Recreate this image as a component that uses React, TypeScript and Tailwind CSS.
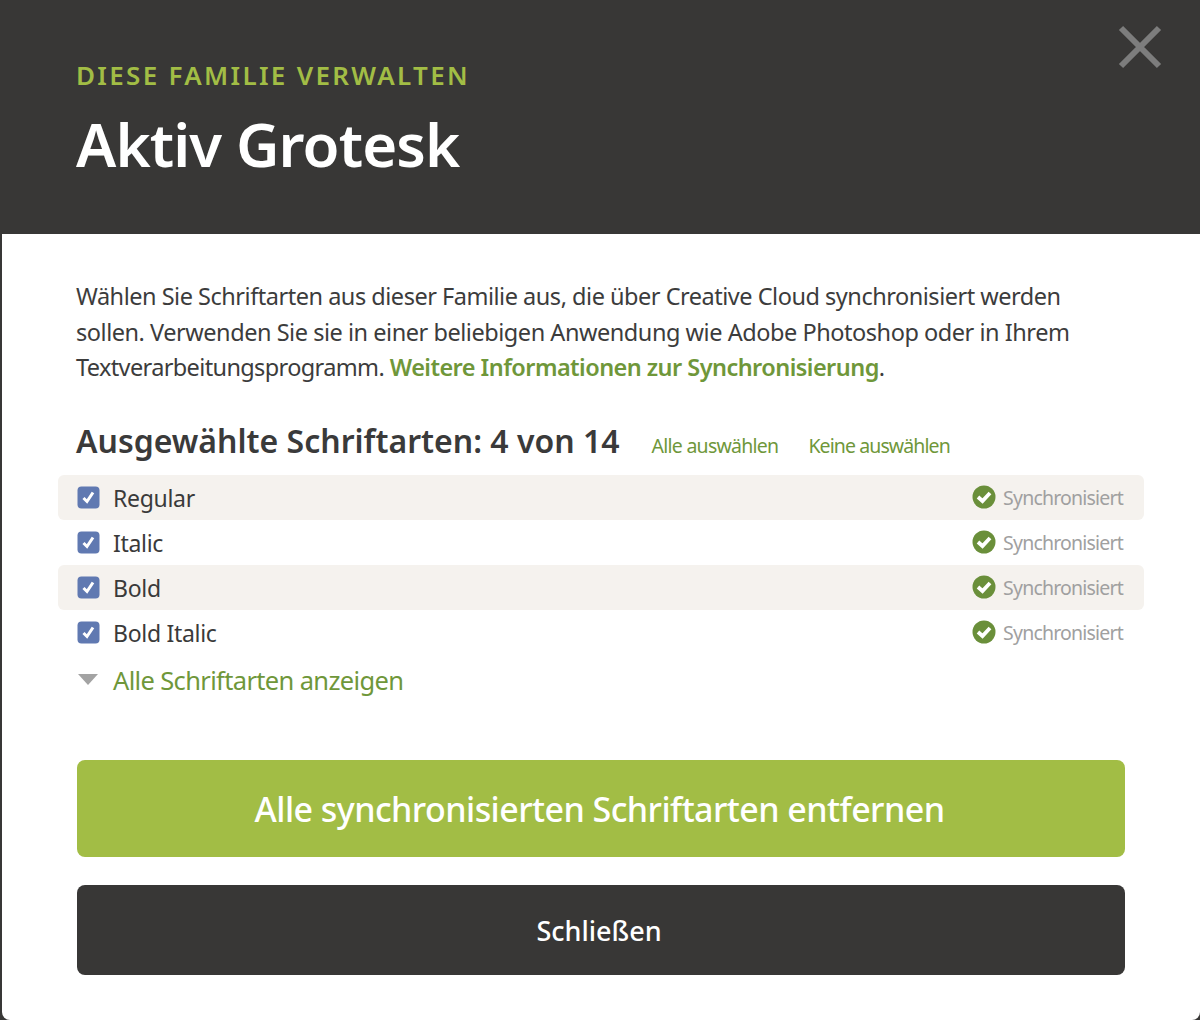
import React from "react";

const fonts = [
  { name: "Regular", shaded: true },
  { name: "Italic", shaded: false },
  { name: "Bold", shaded: true },
  { name: "Bold Italic", shaded: false },
];

// Blue checkbox with white tick
const CheckBox = () => (
  <svg width="23" height="23" viewBox="0 0 23 23" className="shrink-0">
    <rect x="0.5" y="0.5" width="22" height="22" rx="4" fill="#6079b1" />
    <path d="M6.5 12 L10 15.5 L16 6.5" fill="none" stroke="#ffffff" strokeWidth="3" />
  </svg>
);

// Green circle with white tick
const SyncedIcon = () => (
  <svg width="24" height="24" viewBox="0 0 24 24" className="shrink-0">
    <circle cx="12" cy="12" r="11.5" fill="#6a8f3a" />
    <path d="M6 12 L10.5 16 L18 8" fill="none" stroke="#ffffff" strokeWidth="3.8" />
  </svg>
);

function FontRow({ name, shaded }: { name: string; shaded: boolean }) {
  return (
    <div
      className={`flex h-[45px] items-center justify-between rounded-[6px] pl-[19px] pr-[21px] ${
        shaded ? "bg-[#f5f2ee]" : ""
      }`}
    >
      <div className="flex items-center gap-[13px]">
        <CheckBox />
        <span className="pt-[2px] text-[23px] tracking-[-0.3px] text-[#3a3a3a]">{name}</span>
      </div>
      <div className="flex items-center gap-[7px]">
        <SyncedIcon />
        <span className="pt-[2px] text-[19.5px] tracking-[-0.8px] text-[#a0a0a0]">
          Synchronisiert
        </span>
      </div>
    </div>
  );
}

export default function App() {
  return (
    <div className="h-[1020px] w-[1200px] overflow-hidden bg-[#383736] font-['Noto_Sans',sans-serif]">
      {/* Dark header */}
      <div className="relative h-[234px] pl-[76px] pt-[56px]">
        <p className="text-[26px] leading-[38px] font-semibold tracking-[2.3px] text-[#a2bd45]">
          DIESE FAMILIE VERWALTEN
        </p>
        <h1 className="mt-[10px] text-[60px] leading-[80px] font-semibold tracking-[-0.9px] text-white">
          Aktiv Grotesk
        </h1>
        <svg
          width="44"
          height="44"
          viewBox="0 0 44 44"
          className="absolute right-[38px] top-[25px]"
        >
          <path d="M3 3 L41 41 M41 3 L3 41" stroke="#7d7d7d" strokeWidth="6" />
        </svg>
      </div>

      {/* White panel, the dark backing shows at the left edge and bottom corners */}
      <div className="ml-[2px] h-[786px] rounded-b-[8px] bg-white pl-[56px] pr-[56px] pt-[45px]">
        {/* Intro copy */}
        <p className="pl-[18px] text-[23.5px] leading-[35.5px] tracking-[-0.46px] text-[#3c3c3c]">
          <span className="tracking-[-0.48px]">
            Wählen Sie Schriftarten aus dieser Familie aus, die über Creative Cloud synchronisiert
            werden
          </span>
          <br />
          sollen. Verwenden Sie sie in einer beliebigen Anwendung wie Adobe Photoshop oder in Ihrem
          <br />
          <span className="tracking-[-0.63px]">Textverarbeitungsprogramm.</span>{" "}
          <span className="font-semibold tracking-[-0.55px] text-[#6f973a]">
            Weitere Informationen zur Synchronisierung
          </span>
          .
        </p>

        {/* Selection heading */}
        <div className="mt-[31px] flex h-[48px] items-center pl-[18px]">
          <h2 className="text-[32px] font-semibold tracking-[0px] text-[#3a3a3a]">
            Ausgewählte Schriftarten: 4 von 14
          </h2>
          <a className="ml-[32px] mt-[10px] text-[19.5px] tracking-[-0.75px] text-[#6f973a]">
            Alle auswählen
          </a>
          <a className="ml-[30px] mt-[10px] text-[19.5px] tracking-[-0.9px] text-[#6f973a]">
            Keine auswählen
          </a>
        </div>

        {/* Font rows */}
        <div className="mt-[10px]">
          {fonts.map((f) => (
            <FontRow key={f.name} name={f.name} shaded={f.shaded} />
          ))}
        </div>

        {/* Show all toggle */}
        <div className="mt-[3px] flex h-[45px] items-center gap-[15px] pl-[20px]">
          <svg width="20" height="12" viewBox="0 0 20 12" className="shrink-0">
            <path d="M0 0 H20 L10 11 Z" fill="#a3a3a3" />
          </svg>
          <span className="text-[25.5px] tracking-[-0.65px] text-[#6f973a]">
            Alle Schriftarten anzeigen
          </span>
        </div>

        {/* Actions */}
        <div className="mt-[57px] flex flex-col gap-[28px] px-[19px]">
          <button className="h-[97px] rounded-[8px] bg-[#a2bd45] pr-[3px] pt-[2px] text-[34px] font-medium tracking-[-0.55px] text-white">
            Alle synchronisierten Schriftarten entfernen
          </button>
          <button className="h-[90px] rounded-[8px] bg-[#383736] pr-[4px] pt-[4px] text-[27px] font-medium text-white">
            Schließen
          </button>
        </div>
      </div>
    </div>
  );
}
